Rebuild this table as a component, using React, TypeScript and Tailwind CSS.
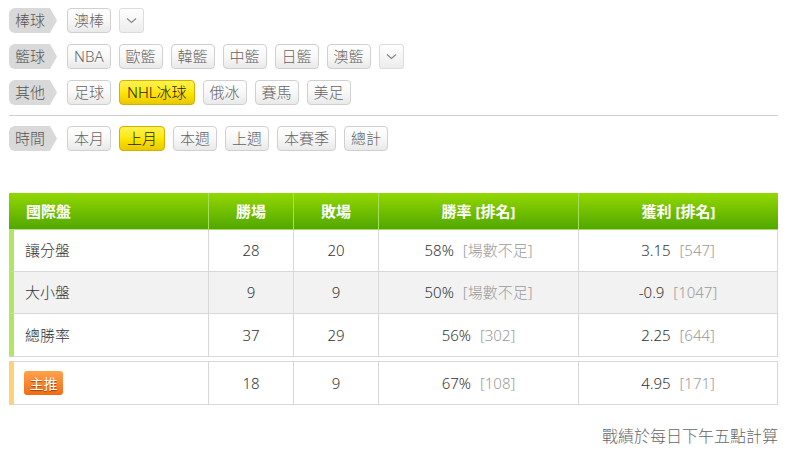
import React from 'react'

const font = { fontFamily: '"Noto Sans", "Noto Sans CJK TC", sans-serif' }

function Tag({ text }: { text: string }) {
  return (
    <span className="inline-flex h-[25px] w-[48px] items-center rounded-l-[6px] bg-[#d9d9d9] pl-[6px] text-[15px] text-[#555] [clip-path:polygon(0_0,calc(100%-7px)_0,100%_50%,calc(100%-7px)_100%,0_100%)]">
      {text}
    </span>
  )
}

function Btn({ text, on }: { text: string; on?: boolean }) {
  const cls = on
    ? 'border-[#d4b000] bg-gradient-to-b from-[#fff34a] via-[#ffe600] to-[#e8c800] px-[7px] text-[#222]'
    : 'border-[#d0d0d0] bg-gradient-to-b from-white via-[#f8f8f8] to-[#e9e9e9] px-[6px] text-[#666]'
  return (
    <span className={`inline-flex h-[25px] items-center rounded-[4px] border text-[15px] leading-none ${cls}`}>
      {text}
    </span>
  )
}

function Drop() {
  return (
    <span className="inline-flex h-[25px] w-[25px] items-center justify-center rounded-[3px] border border-[#dcdcdc] bg-gradient-to-b from-white to-[#ececec]">
      <svg width="11" height="7" viewBox="0 0 11 7">
        <path d="M1 1.5 L5.5 5.5 L10 1.5" fill="none" stroke="#888" strokeWidth="1.1" />
      </svg>
    </span>
  )
}

function Row({ label, items, on, drop }: { label: string; items: string[]; on?: string; drop?: boolean }) {
  return (
    <div className="flex items-center">
      <Tag text={label} />
      <div className="ml-[10px] flex gap-[8px]">
        {items.map((t) => (
          <Btn key={t} text={t} on={t === on} />
        ))}
        {drop && <Drop />}
      </div>
    </div>
  )
}

const rows = [
  { name: '讓分盤', w: 28, l: 20, rate: '58%', rr: '[場數不足]', p: '3.15', pr: '[547]', bg: 'bg-white', h: 'h-[42px]' },
  { name: '大小盤', w: 9, l: 9, rate: '50%', rr: '[場數不足]', p: '-0.9', pr: '[1047]', bg: 'bg-[#f2f2f2]', h: 'h-[42px]' },
  { name: '總勝率', w: 37, l: 29, rate: '56%', rr: '[302]', p: '2.25', pr: '[644]', bg: 'bg-white', h: 'h-[43px]' },
]

function Val({ v, r }: { v: string; r: string }) {
  return (
    <span>
      {v}
      <span className="ml-[9px] text-[#9a9a9a]">{r}</span>
    </span>
  )
}

const cols = (
  <colgroup>
    <col className="w-[199px]" />
    <col className="w-[85px]" />
    <col className="w-[85px]" />
    <col className="w-[200px]" />
    <col className="w-[200px]" />
  </colgroup>
)

export default function App() {
  return (
    <div style={font} className="h-[452px] w-[794px] bg-white pl-[9px] pr-[16px] pt-[8px] font-light text-[#333]">
      <div className="flex flex-col gap-[11px]">
        <Row label="棒球" items={['澳棒']} drop />
        <Row label="籃球" items={['NBA', '歐籃', '韓籃', '中籃', '日籃', '澳籃']} drop />
        <Row label="其他" items={['足球', 'NHL冰球', '俄冰', '賽馬', '美足']} on="NHL冰球" />
      </div>
      <div className="mt-[10px] h-px bg-[#cfcfcf]" />
      <div className="mt-[10px]">
        <Row label="時間" items={['本月', '上月', '本週', '上週', '本賽季', '總計']} on="上月" />
      </div>

      <table className="mt-[42px] w-[769px] table-fixed border-separate border-spacing-0 text-[15px]">
        {cols}
        <thead>
          <tr className="h-[37px] bg-gradient-to-b from-[#92d800] to-[#4fa600] text-[15px] text-white">
            <th className="border-b border-[#b4e67a] pl-[17px] text-left font-bold">國際盤</th>
            <th className="border-b border-l border-[#a6df5a] font-bold">勝場</th>
            <th className="border-b border-l border-[#a6df5a] font-bold">敗場</th>
            <th className="border-b border-l border-[#a6df5a] font-bold">勝率 [排名]</th>
            <th className="border-b border-l border-[#a6df5a] font-bold">獲利 [排名]</th>
          </tr>
        </thead>
        <tbody>
          {rows.map((r) => (
            <tr key={r.name} className={`${r.h} ${r.bg}`}>
              <td className="border-b border-l-[5px] border-b-[#d8d8d8] border-l-[#b2e466] pl-[11px]">{r.name}</td>
              <td className="border-b border-l border-[#d8d8d8] text-center">{r.w}</td>
              <td className="border-b border-l border-[#d8d8d8] text-center">{r.l}</td>
              <td className="border-b border-l border-[#d8d8d8] text-center"><Val v={r.rate} r={r.rr} /></td>
              <td className="border-x border-b border-[#d8d8d8] text-center"><Val v={r.p} r={r.pr} /></td>
            </tr>
          ))}
        </tbody>
      </table>

      <table className="mt-[4px] w-[769px] table-fixed border-separate border-spacing-0 text-[15px]">
        {cols}
        <tbody>
          <tr className="h-[44px] bg-white">
            <td className="border-y border-l-[5px] border-y-[#d8d8d8] border-l-[#ffd27a] pl-[10px]">
              <span className="inline-flex h-[24px] w-[39px] items-center justify-center rounded-[3px] bg-gradient-to-b from-[#ffa24a] to-[#f26a10] text-[14px] font-normal text-white [text-shadow:0_1px_1px_rgba(120,40,0,0.7)]">
                主推
              </span>
            </td>
            <td className="border-y border-l border-[#d8d8d8] text-center">18</td>
            <td className="border-y border-l border-[#d8d8d8] text-center">9</td>
            <td className="border-y border-l border-[#d8d8d8] text-center"><Val v="67%" r="[108]" /></td>
            <td className="border border-[#d8d8d8] text-center"><Val v="4.95" r="[171]" /></td>
          </tr>
        </tbody>
      </table>

      <div className="mt-[19px] text-right text-[16px] text-[#666]">戰績於每日下午五點計算</div>
    </div>
  )
}
